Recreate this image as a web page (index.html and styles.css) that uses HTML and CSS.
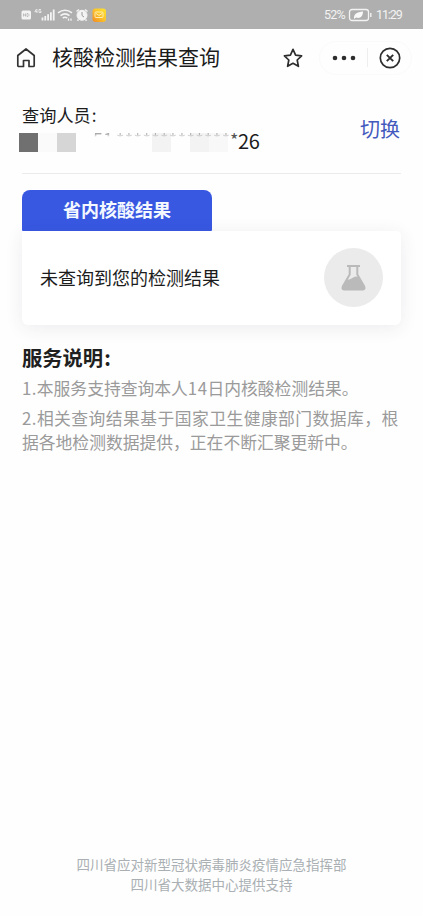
FILE: index.html
```html
<!DOCTYPE html>
<html lang="zh-CN">
<head>
<meta charset="utf-8">
<meta name="viewport" content="width=device-width, initial-scale=1">
<title>核酸检测结果查询</title>
<link rel="stylesheet" href="styles.css">
</head>
<body>
<div class="status">
  <svg class="status-icons" width="90" height="18" viewBox="0 0 90 18" fill="none" stroke="#f3f3f3">
    <rect x="2.500" y="4.500" width="9.500" height="9" rx="1.500" fill="#f3f3f3" stroke="none"/>
    <path d="M4.500 7.500v3M6.500 7.500v3M4.500 9h2M8 7.500v3h1l.8-.8V8.300l-.8-.8z" stroke="#aaa" stroke-width=".7"/>
    <path d="M17.500 3l-1.700 2.700h2.500M17.900 3v4M22 3.500h-2v3h2V5h-1" stroke-width=".8"/>
    <path d="M23.500 11.500v3M26.300 10V14.500M29.100 8.200V14.500M31.900 6.300V14.500M34.700 3.500V14.500" stroke-width="1.800"/>
    <path d="M39 6.800q7-5.200 14 0M41.500 9.600q4.500-3.500 9 0M43.800 12q2.200-1.600 4.400 0" stroke-width="1.600"/>
    <path d="M46 14.200h.1M49.500 12.500v2.200M52 12.500v2.200" stroke-width="1.300"/>
    <circle cx="63" cy="9.300" r="5" fill="#f3f3f3"/>
    <path d="M57.500 5.500L60 3.500M68.500 5.500L66 3.500M59.500 13.500l-1 1.300M66.500 13.500l1 1.300" stroke-width="1.500"/>
    <path d="M63 6v3.500l2 1.500" stroke="#999" stroke-width="1"/>
    <rect x="73.500" y="2.500" width="13.500" height="13.500" rx="3" fill="url(#g)" stroke="none"/>
    <rect x="76" y="6" width="8" height="5.500" rx="1" stroke="#fff4c0" stroke-width=".9"/>
    <path d="M77 7.500l3 2 3-2" stroke="#fff4c0" stroke-width=".9"/>
    <defs><linearGradient id="g" x1="1" y1="0" x2="0" y2="1"><stop stop-color="#ffe52e"/><stop offset=".45" stop-color="#fbc52b"/><stop offset="1" stop-color="#f18a22"/></linearGradient></defs>
  </svg>
  <div class="status-right">
    <span class="pct">52%</span>
    <svg width="24" height="14" viewBox="0 0 24 14" fill="none">
      <rect x="1.500" y="1.500" width="19" height="11" rx="2.500" stroke="#f3f3f3" stroke-width="1.300"/>
      <path d="M22.800 5v4" stroke="#f3f3f3" stroke-width="1.400"/>
      <path d="M6 11c-.5-5 3-7 9-7.500 0 5-3 7.500-7 6z" fill="#f8f8f8"/>
    </svg>
    <span class="time">11:29</span>
  </div>
</div>
<header class="nav">
  <svg class="home" width="22" height="22" viewBox="0 0 22 22" fill="none" stroke="#333" stroke-width="1.700" stroke-linejoin="round">
    <path d="M2.800 8.500L11 2l8.200 6.500V18.500q0 1-1 1H14v-6H8.500v6H3.800q-1 0-1-1z"/>
  </svg>
  <h1>核酸检测结果查询</h1>
  <svg class="star" width="22" height="22" viewBox="0 0 22 22" fill="none" stroke="#2d2d2d" stroke-width="1.700" stroke-linejoin="round">
    <path d="M11 2.300l2.600 5.800 6 .7-4.400 4.200 1.200 6.300-5.400-3-5.400 3 1.200-6.300L2.400 8.800l6-.7z"/>
  </svg>
  <div class="capsule">
    <svg width="24" height="6" viewBox="0 0 24 6" fill="#2d2d2d"><circle cx="3" cy="3" r="2.300"/><circle cx="12" cy="3" r="2.300"/><circle cx="21" cy="3" r="2.300"/></svg>
    <i></i>
    <svg width="22" height="22" viewBox="0 0 22 22" fill="none" stroke="#2d2d2d" stroke-width="1.700"><circle cx="11" cy="11" r="9.700"/><path d="M7.800 7.800l6.400 6.400M14.200 7.800l-6.400 6.400" stroke-width="1.900"/></svg>
  </div>
</header>
<main>
  <section class="person">
    <div>
      <div class="label">查询人员<span>:</span></div>
      <div class="idline">
        <div class="mosaic"><b class="c1"></b><b class="c2"></b><b class="c3"></b><b></b><b></b><b></b><b></b><b class="c4"></b><b></b><b class="c4"></b><b class="c5"></b></div>
        <span class="lead">51</span><span class="stars">*************</span><span class="last">*</span><span class="tail">26</span>
      </div>
    </div>
    <a class="switch">切换</a>
  </section>
  <div class="tab">省内核酸结果</div>
  <section class="card">
    <span>未查询到您的检测结果</span>
    <div class="disc">
      <svg width="28" height="28" viewBox="0 0 28 28">
        <path d="M7 2h13M9.700 2.500v8L2.800 22.500q-1 3 1.200 3h19q2.200 0 1.200-3L17.300 10.500v-8" fill="none" stroke="#bababa" stroke-width="2"/>
        <path d="M6.600 16q3.700-.5 6.200-2.300 2.500-1.500 5-1l6.400 9.800q1 3-1.200 3H4q-2.200 0-1.200-3z" fill="#bababa"/>
      </svg>
    </div>
  </section>
  <section class="notes">
    <h2>服务说明<span>:</span></h2>
    <p><span class="first">1.</span>本服务支持查询本人<span class="num">14</span>日内核酸检测结果。</p>
    <p><span class="wide">2.相关查询结果基于国家卫生健康部门数据库，根</span><br>据各地检测数据提供，正在不断汇聚更新中。</p>
  </section>
</main>
<footer>四川省应对新型冠状病毒肺炎疫情应急指挥部<br>四川省大数据中心提供支持</footer>
</body>
</html>
```
FILE: styles.css
```css
* { box-sizing: border-box; }
body {
  margin: 0;
  height: 916px;
  display: flex;
  flex-direction: column;
  overflow: hidden;
  background: #fefefe;
  color: #1c1c1c;
  font-family: "Noto Sans CJK SC", sans-serif;
}
svg { display: block; flex: none; }
h1, h2, p { margin: 0; }
.status {
  height: 29px;
  padding: 1px 19px 0 19px;
  display: flex;
  align-items: center;
  justify-content: space-between;
  background: #afafaf;
  color: #f3f3f3;
}
.status-right {
  display: flex;
  align-items: center;
  font: 12.5px/18px Roboto, sans-serif;
}
.pct { width: 24px; letter-spacing: -.8px; }
.time { width: 28px; margin-left: 4px; letter-spacing: -1.1px; white-space: nowrap; }
.nav {
  height: 57px;
  padding: 0 11px 0 15px;
  display: flex;
  align-items: center;
}
h1 {
  margin: -3px 0 0 15px;
  font-size: 21px;
  line-height: 30px;
  font-weight: 400;
}
.star { margin-left: auto; margin-right: 15.5px; }
.capsule {
  width: 93px;
  height: 34px;
  padding: 0 10px 0 12px;
  display: flex;
  align-items: center;
  justify-content: space-between;
  border: 1px solid #fafafa;
  border-radius: 17px;
}
.capsule i { width: 1px; height: 19px; background: #eee; }
main { padding: 0 22px; }
.person {
  height: 88px;
  padding-top: 17px;
  display: flex;
  justify-content: space-between;
  border-bottom: 1.5px solid #ebebeb;
}
.label { font-size: 17.2px; line-height: 24px; }
.label span, h2 span { margin-left: 1px; }
.idline {
  position: relative;
  height: 27px;
  display: flex;
  font-size: 20px;
  line-height: 28px;
}
.lead, .stars, .last, .tail { position: relative; }
.lead, .stars {
  height: 24px;
  font-size: 18px;
  line-height: 24px;
  color: transparent;
  background: linear-gradient(#aaa 7px, rgba(170, 170, 170, 0) 10px);
  background-clip: text;
  -webkit-background-clip: text;
  white-space: nowrap;
}
.lead { width: 94px; padding-left: 71px; }
.stars { width: 114px; letter-spacing: .4px; }
.last { width: 8px; font-size: 18px; line-height: 25px; color: #555; }
.tail { letter-spacing: -.3px; }
.mosaic {
  position: absolute;
  left: -3px;
  top: 6px;
  display: flex;
  height: 19px;
}
.mosaic b { width: 19px; background: #fefefe; }
.mosaic .c1 { background: #707070; }
.mosaic .c2 { background: #fafafa; }
.mosaic .c3 { background: #d6d6d6; }
.mosaic .c4 { background: #f3f3f3; }
.mosaic .c5 { background: #f8f8f8; }
.switch { margin: 11px 1px 0 0; font-size: 20px; line-height: 30px; color: #4359bd; }
.tab {
  width: 190px;
  height: 41px;
  margin-top: 16px;
  border-radius: 8px 8px 1px 1px;
  background: #3858e2;
  color: #f4f8ff;
  text-align: center;
  font-size: 18px;
  line-height: 39px;
  font-weight: 700;
}
.card {
  height: 94px;
  padding: 0 18px;
  display: flex;
  align-items: center;
  justify-content: space-between;
  border-radius: 0 5px 6px 6px;
  background: #fff;
  box-shadow: 0 3px 18px rgba(60, 60, 90, .09);
  font-size: 18px;
}
.card > span { margin-top: -2px; }
.disc {
  width: 59px;
  height: 59px;
  margin-top: -1px;
  display: grid;
  place-items: center;
  border-radius: 50%;
  background: #ebebeb;
}
.notes { padding-top: 17px; color: #9a9a9a; }
h2 { margin-bottom: 4px; color: #202020; font-size: 20.3px; line-height: 30px; font-weight: 700; }
.notes p { margin-bottom: 5px; font-size: 16.8px; line-height: 24.5px; white-space: nowrap; }
.first { letter-spacing: .4px; }
.num { letter-spacing: .5px; }
.wide { letter-spacing: .45px; }
footer {
  margin-top: auto;
  padding-bottom: 22px;
  color: #a9afb2;
  text-align: center;
  font-size: 13.5px;
  line-height: 20px;
}
```
